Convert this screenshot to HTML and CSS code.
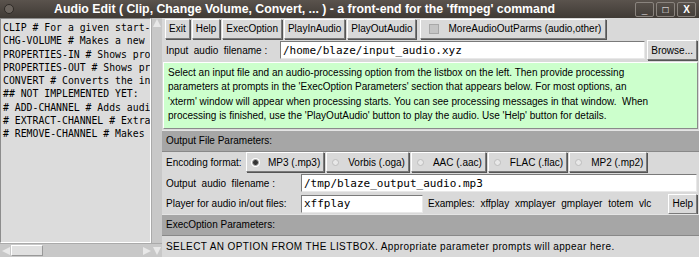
FILE: index.html
```html
<!DOCTYPE html>
<html lang="en">
<head>
    <meta charset="UTF-8">
    <title>Audio Edit</title>
    <link rel="stylesheet" href="styles.css">
</head>
<body>
    <div class="window">
        <div class="titlebar">
            <span class="wm-dot"></span>
            <span class="title">Audio Edit ( Clip, Change Volume, Convert, ... ) - a front-end for the 'ffmpeg' command</span>
            <div class="wm-buttons">
                <span class="wm-btn">_</span>
                <span class="wm-btn">&#9633;</span>
                <span class="wm-btn">X</span>
            </div>
        </div>
        <div class="main">
            <div class="left">
                <div class="listrow">
                    <div class="listbox">
                        <div>CLIP # For a given start-</div>
                        <div>CHG-VOLUME # Makes a new</div>
                        <div>PROPERTIES-IN # Shows pro</div>
                        <div>PROPERTIES-OUT # Shows pr</div>
                        <div>CONVERT # Converts the in</div>
                        <div>## NOT IMPLEMENTED YET:</div>
                        <div># ADD-CHANNEL # Adds audi</div>
                        <div># EXTRACT-CHANNEL # Extra</div>
                        <div># REMOVE-CHANNEL # Makes</div>
                    </div>
                    <div class="vscroll">
                        <span class="arrow-up"></span>
                    </div>
                </div>
                <div class="hscroll">
                    <span class="arrow-left"></span>
                    <span class="hthumb"></span>
                    <span class="hspace"></span>
                    <span class="arrow-right"></span>
                    <span class="arrow-down"></span>
                </div>
            </div>
            <div class="right">
                <div class="row buttons">
                    <button class="btn">Exit</button>
                    <button class="btn">Help</button>
                    <button class="btn">ExecOption</button>
                    <button class="btn">PlayInAudio</button>
                    <button class="btn">PlayOutAudio</button>
                    <button class="btn check"><span class="box"></span>MoreAudioOutParms (audio,other)</button>
                </div>
                <div class="row">
                    <span class="label in-label">Input&nbsp; audio&nbsp; filename :</span>
                    <input class="entry grow" type="text" value="/home/blaze/input_audio.xyz">
                    <button class="btn">Browse...</button>
                </div>
                <div class="info">
                    Select an input file and an audio-processing option from the listbox on the left. Then provide processing<br>
                    parameters at prompts in the 'ExecOption Parameters' section that appears below. For most options, an<br>
                    'xterm' window will appear when processing starts. You can see processing messages in that window.&nbsp; When<br>
                    processing is finished, use the 'PlayOutAudio' button to play the audio. Use 'Help' button for details.
                </div>
                <div class="section">Output File Parameters:</div>
                <div class="row">
                    <span class="label enc-label">Encoding format:</span>
                    <button class="btn radio on"><span class="dot"></span>MP3 (.mp3)</button>
                    <button class="btn radio"><span class="dot"></span>Vorbis (.oga)</button>
                    <button class="btn radio"><span class="dot"></span>AAC (.aac)</button>
                    <button class="btn radio"><span class="dot"></span>FLAC (.flac)</button>
                    <button class="btn radio"><span class="dot"></span>MP2 (.mp2)</button>
                </div>
                <div class="row">
                    <span class="label out-label">Output&nbsp; audio&nbsp; filename :</span>
                    <input class="entry grow" type="text" value="/tmp/blaze_output_audio.mp3">
                </div>
                <div class="row">
                    <span class="label out-label">Player for audio in/out files:</span>
                    <input class="entry player" type="text" value="xffplay">
                    <span class="label examples">Examples: xffplay xmplayer gmplayer totem vlc</span>
                    <button class="btn">Help</button>
                </div>
                <div class="section">ExecOption Parameters:</div>
                <div class="row">
                    <span class="label prompt">SELECT AN OPTION FROM THE LISTBOX. Appropriate parameter prompts will appear here.</span>
                </div>
            </div>
        </div>
    </div>
</body>
</html>
```

FILE: styles.css
```css
body {
    margin: 0;
    padding: 0;
    background-color: #d9d9d9;
    font-family: "Liberation Sans", Arial, sans-serif;
    font-size: 10px;
    color: #000;
}
.window {
    width: 699px;
    height: 257px;
    overflow: hidden;
}
.titlebar {
    height: 18px;
    display: flex;
    align-items: center;
    background: linear-gradient(#5a534d, #3f3a35);
    color: #fff;
}
.wm-dot {
    width: 8px;
    height: 8px;
    margin: 0 0 0 4px;
    border-radius: 50%;
    background: #6b645e;
    border: 1px solid #2e2a26;
}
.title {
    flex: 1;
    margin-left: 40px;
    font-weight: bold;
    font-size: 12.3px;
    white-space: nowrap;
}
.wm-buttons {
    display: flex;
    gap: 2px;
    margin-right: 3px;
}
.wm-btn {
    width: 17px;
    height: 13px;
    border: 1px solid #8a847e;
    border-radius: 2px;
    font-size: 10px;
    font-weight: bold;
    line-height: 13px;
    text-align: center;
    background: linear-gradient(#57504a, #443f3a);
}
.main {
    display: flex;
    height: 239px;
}
.left {
    width: 162px;
    display: flex;
    flex-direction: column;
}
.listrow {
    flex: 1;
    display: flex;
}
.listbox {
    flex: 1;
    background-color: #dcdcdc;
    border: 1px solid;
    border-color: #8c8c8c #fff #fff #8c8c8c;
    padding: 2px 2px;
    font-family: "DejaVu Sans Mono", monospace;
    font-size: 9.8px;
    line-height: 13.3px;
    white-space: nowrap;
    overflow: hidden;
}
.vscroll {
    width: 10px;
    background-color: #c8c8c8;
    border-left: 1px solid #aaa;
}
.arrow-up {
    display: block;
    width: 0;
    height: 0;
    margin: 1px 0 0 1px;
    border-left: 4px solid transparent;
    border-right: 4px solid transparent;
    border-bottom: 8px solid #e8e8e8;
}
.hscroll {
    height: 13px;
    display: flex;
    align-items: center;
    background-color: #c8c8c8;
    border-top: 1px solid #aaa;
}
.arrow-left, .arrow-right {
    width: 0;
    height: 0;
    border-top: 4px solid transparent;
    border-bottom: 4px solid transparent;
}
.arrow-left {
    margin-left: 2px;
    border-right: 8px solid #e8e8e8;
}
.arrow-right {
    border-left: 8px solid #e8e8e8;
}
.arrow-down {
    width: 0;
    height: 0;
    margin: 0 1px 0 2px;
    border-left: 4px solid transparent;
    border-right: 4px solid transparent;
    border-top: 8px solid #e8e8e8;
}
.hthumb {
    width: 30px;
    height: 9px;
    margin-left: 1px;
    background-color: #e0e0e0;
    border: 1px solid;
    border-color: #fff #999 #999 #fff;
}
.hspace {
    flex: 1;
}
.right {
    flex: 1;
    min-width: 0;
    display: flex;
    flex-direction: column;
}
.row {
    display: flex;
    align-items: center;
    gap: 2px;
    padding: 0 2px 0 4px;
    height: 21px;
}
.row.buttons {
    padding-left: 3px;
    height: 22px;
}
.btn {
    height: 20px;
    padding: 0 3px;
    font-family: inherit;
    font-size: inherit;
    background-color: #d9d9d9;
    border: 1px solid;
    border-color: #fff #7a7a7a #7a7a7a #fff;
    box-shadow: 1px 1px 0 #555;
    display: flex;
    align-items: center;
    white-space: nowrap;
    flex-shrink: 0;
}
.check {
    margin-left: 2px;
    padding: 0 4px 0 8px;
}
.box {
    width: 8px;
    height: 8px;
    margin-right: 9px;
    background-color: #c4c4c4;
    border: 1px solid #a8a8a8;
}
.radio {
    padding: 0 3px 0 5px;
}
.dot {
    width: 5px;
    height: 5px;
    margin-right: 9px;
    border-radius: 50%;
    background-color: #e8e8e8;
    border: 1px solid #bdbdbd;
}
.radio.on .dot {
    background-color: #333;
    border-color: #aaa;
    box-shadow: 0 0 0 1px #fff;
}
.label {
    white-space: nowrap;
}
.in-label {
    width: 112px;
}
.out-label {
    width: 133px;
}
.enc-label {
    width: 78px;
}
.entry {
    height: 18px;
    box-sizing: border-box;
    padding: 0 2px;
    font-family: "DejaVu Sans Mono", monospace;
    font-size: 11px;
    background-color: #fff;
    border: 1px solid;
    border-color: #7a7a7a #e8e8e8 #e8e8e8 #7a7a7a;
}
.grow {
    flex: 1;
    min-width: 0;
}
.player {
    width: 122px;
}
.examples {
    flex: 1;
    min-width: 0;
    padding-left: 3px;
    word-spacing: 3px;
}
.prompt {
    letter-spacing: 0.4px;
}
.info {
    margin: 1px 1px 1px 1px;
    padding: 3px 4px;
    height: 60px;
    background-color: #ccffcc;
    border: 1px solid;
    border-color: #fff #8a8a8a #8a8a8a #fff;
    line-height: 14.5px;
    white-space: nowrap;
}
.section {
    height: 20px;
    line-height: 20px;
    padding-left: 4px;
    background-color: #a6a6a6;
    border-top: 1px solid #e4e4e4;
    border-bottom: 1px solid #888;
}
```
